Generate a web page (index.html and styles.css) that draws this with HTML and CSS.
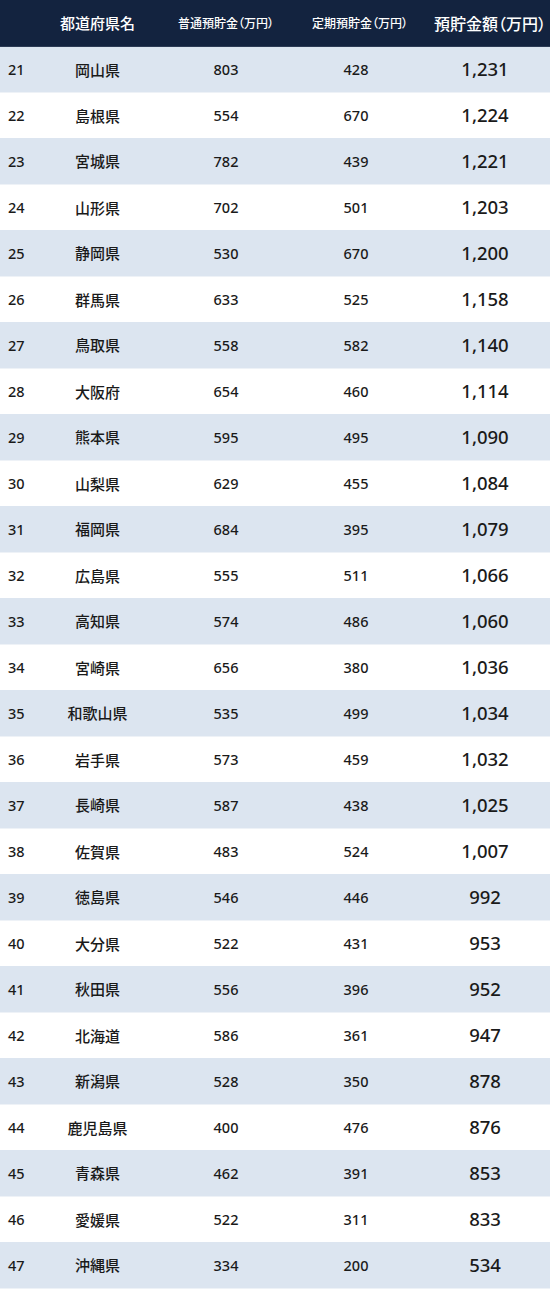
FILE: index.html
```html
<!DOCTYPE html>
<html lang="ja">
<head>
<meta charset="utf-8">
<link rel="stylesheet" href="styles.css">
</head>
<body>
<table class="rank-table">
  <colgroup>
    <col class="c-rank"><col class="c-name"><col class="c-a"><col class="c-b"><col class="c-total">
  </colgroup>
  <thead>
    <tr>
      <th></th>
      <th class="h-name">都道府県名</th>
      <th class="h-small">普通預貯金（万円）</th>
      <th class="h-small">定期預貯金（万円）</th>
      <th class="h-total">預貯金額（万円）</th>
    </tr>
  </thead>
  <tbody>
    <tr><td class="rank">21</td><td class="name">岡山県</td><td>803</td><td>428</td><td class="total">1,231</td></tr>
    <tr><td class="rank">22</td><td class="name">島根県</td><td>554</td><td>670</td><td class="total">1,224</td></tr>
    <tr><td class="rank">23</td><td class="name">宮城県</td><td>782</td><td>439</td><td class="total">1,221</td></tr>
    <tr><td class="rank">24</td><td class="name">山形県</td><td>702</td><td>501</td><td class="total">1,203</td></tr>
    <tr><td class="rank">25</td><td class="name">静岡県</td><td>530</td><td>670</td><td class="total">1,200</td></tr>
    <tr><td class="rank">26</td><td class="name">群馬県</td><td>633</td><td>525</td><td class="total">1,158</td></tr>
    <tr><td class="rank">27</td><td class="name">鳥取県</td><td>558</td><td>582</td><td class="total">1,140</td></tr>
    <tr><td class="rank">28</td><td class="name">大阪府</td><td>654</td><td>460</td><td class="total">1,114</td></tr>
    <tr><td class="rank">29</td><td class="name">熊本県</td><td>595</td><td>495</td><td class="total">1,090</td></tr>
    <tr><td class="rank">30</td><td class="name">山梨県</td><td>629</td><td>455</td><td class="total">1,084</td></tr>
    <tr><td class="rank">31</td><td class="name">福岡県</td><td>684</td><td>395</td><td class="total">1,079</td></tr>
    <tr><td class="rank">32</td><td class="name">広島県</td><td>555</td><td>511</td><td class="total">1,066</td></tr>
    <tr><td class="rank">33</td><td class="name">高知県</td><td>574</td><td>486</td><td class="total">1,060</td></tr>
    <tr><td class="rank">34</td><td class="name">宮崎県</td><td>656</td><td>380</td><td class="total">1,036</td></tr>
    <tr><td class="rank">35</td><td class="name">和歌山県</td><td>535</td><td>499</td><td class="total">1,034</td></tr>
    <tr><td class="rank">36</td><td class="name">岩手県</td><td>573</td><td>459</td><td class="total">1,032</td></tr>
    <tr><td class="rank">37</td><td class="name">長崎県</td><td>587</td><td>438</td><td class="total">1,025</td></tr>
    <tr><td class="rank">38</td><td class="name">佐賀県</td><td>483</td><td>524</td><td class="total">1,007</td></tr>
    <tr><td class="rank">39</td><td class="name">徳島県</td><td>546</td><td>446</td><td class="total">992</td></tr>
    <tr><td class="rank">40</td><td class="name">大分県</td><td>522</td><td>431</td><td class="total">953</td></tr>
    <tr><td class="rank">41</td><td class="name">秋田県</td><td>556</td><td>396</td><td class="total">952</td></tr>
    <tr><td class="rank">42</td><td class="name">北海道</td><td>586</td><td>361</td><td class="total">947</td></tr>
    <tr><td class="rank">43</td><td class="name">新潟県</td><td>528</td><td>350</td><td class="total">878</td></tr>
    <tr><td class="rank">44</td><td class="name">鹿児島県</td><td>400</td><td>476</td><td class="total">876</td></tr>
    <tr><td class="rank">45</td><td class="name">青森県</td><td>462</td><td>391</td><td class="total">853</td></tr>
    <tr><td class="rank">46</td><td class="name">愛媛県</td><td>522</td><td>311</td><td class="total">833</td></tr>
    <tr><td class="rank">47</td><td class="name">沖縄県</td><td>334</td><td>200</td><td class="total">534</td></tr>
  </tbody>
</table>
</body>
</html>
```

FILE: styles.css
```css
html, body {
  margin: 0;
  padding: 0;
  background: #ffffff;
}
body {
  font-family: "Noto Sans", "Noto Sans CJK JP", sans-serif;
  color: #1a1a1a;
}
.rank-table {
  width: 550px;
  border-collapse: collapse;
  table-layout: fixed;
}
.c-rank { width: 55px; }
.c-name { width: 85px; }
.c-a { width: 172px; }
.c-b { width: 88px; }
.c-total { width: 150px; }

.rank-table thead tr {
  background: #13233f;
  height: 46px;
  border-bottom: 1px solid #2c3b55;
}
.rank-table th {
  color: #ffffff;
  font-family: "Noto Sans CJK JP", sans-serif;
  font-weight: 500;
  font-feature-settings: "palt";
  padding: 0;
  text-align: center;
  white-space: nowrap;
  vertical-align: middle;
}
.h-name { font-size: 15px; }
.h-small { font-size: 12px; }
.h-total { font-size: 16px; padding-left: 30px !important; }

.rank-table tbody tr {
  height: 46px;
}
.rank-table tbody tr:nth-child(odd) {
  background: #dce5f0;
}
.rank-table td {
  padding: 0;
  text-align: center;
  vertical-align: middle;
  font-size: 14.5px;
  font-weight: 500;
  line-height: 1;
}
.rank-table tbody tr:nth-child(odd) td {
  border-bottom: 1px solid #eef2f7;
}
.rank-table td.rank {
  text-align: left;
  padding-left: 8px;
}
.rank-table td.name {
  font-family: "Noto Sans CJK JP", sans-serif;
  font-size: 15px;
  font-weight: 500;
  white-space: nowrap;
}
.rank-table td.total {
  font-size: 18.5px;
  font-weight: 500;
  padding-left: 20px;
}
```
